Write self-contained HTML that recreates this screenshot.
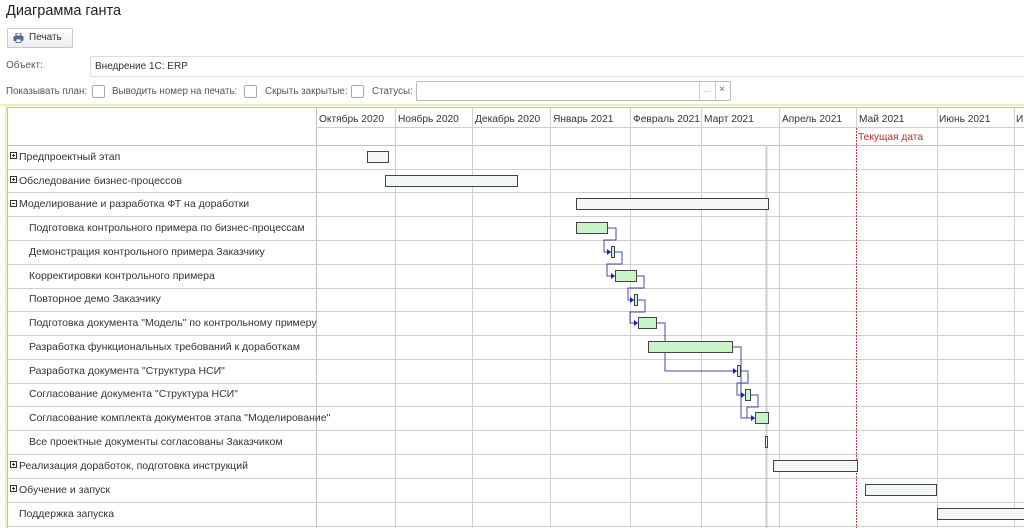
<!DOCTYPE html>
<html><head><meta charset="utf-8"><style>
body{margin:0;width:1024px;height:528px;overflow:hidden;background:#fff;font-family:"Liberation Sans",Arial,sans-serif;color:#333;position:relative}
.a{position:absolute;white-space:nowrap}
.cb{position:absolute;width:11px;height:11px;border:1px solid #aaa;border-radius:2px;background:#fff}
.t{position:absolute;font-size:10.5px;color:#333;white-space:nowrap}
</style></head><body>
<div class="a" style="left:6px;top:3px;font-size:14.5px;color:#222">Диаграмма ганта</div>
<div class="a" style="left:7px;top:28px;width:64px;height:18px;border:1px solid #c8c8c8;border-radius:2px;background:linear-gradient(#fff,#eee);font-size:10px;line-height:18px">
<svg style="position:absolute;left:5px;top:4px" width="11" height="10" viewBox="0 0 11 10"><rect x="3" y="0" width="5" height="3" fill="#fff" stroke="#557"/><rect x="0.5" y="3" width="10" height="5" rx="1" fill="#4a6a9a"/><rect x="3" y="6" width="5" height="3.5" fill="#fff" stroke="#557" stroke-width=".8"/></svg>
<span style="position:absolute;left:21px">Печать</span></div>
<div class="a" style="left:6px;top:60px;font-size:10px;color:#555">Объект:</div>
<div class="a" style="left:90px;top:56px;width:940px;height:19px;border:1px solid #ddd;border-radius:2px;font-size:10px;line-height:19px;text-indent:4px">Внедрение 1С: ERP</div>
<div class="a" style="left:6px;top:86px;font-size:9.8px;color:#555">Показывать план:</div>
<div class="cb" style="left:92px;top:85px"></div>
<div class="a" style="left:112px;top:86px;font-size:9.8px;color:#555">Выводить номер на печать:</div>
<div class="cb" style="left:244px;top:85px"></div>
<div class="a" style="left:265px;top:86px;font-size:9.8px;color:#555">Скрыть закрытые:</div>
<div class="cb" style="left:351px;top:85px"></div>
<div class="a" style="left:372px;top:86px;font-size:9.8px;color:#555">Статусы:</div>
<div class="a" style="left:416px;top:81px;width:313px;height:18px;border:1px solid #bbb;border-radius:2px"></div>
<div class="a" style="left:699px;top:82px;width:1px;height:18px;background:#ccc"></div>
<div class="a" style="left:715px;top:82px;width:1px;height:18px;background:#ccc"></div>
<div class="a" style="left:703px;top:84px;font-size:9px;color:#999">...</div>
<div class="a" style="left:719px;top:84px;font-size:10px;color:#666">×</div>
<div class="a" style="left:0;top:104px;width:1024px;height:2px;background:#f3efb0"></div>
<div class="a" style="left:5px;top:105px;width:2px;height:423px;background:#f3efb0"></div>
<svg class="a" style="left:0;top:0" width="1024" height="528">
<g stroke="#cfcfcf" stroke-width="1" fill="none">
<rect x="7.5" y="107.5" width="1020" height="430" stroke="#c0c0c0"/>
<line x1="316.5" y1="107" x2="316.5" y2="528" stroke="#c0c0c0"/>
<line x1="316" y1="127.5" x2="1024" y2="127.5"/>
<line x1="7" y1="145.5" x2="1024" y2="145.5" stroke="#c0c0c0"/>
<line x1="7" y1="169.5" x2="1024" y2="169.5"/><line x1="7" y1="192.5" x2="1024" y2="192.5"/><line x1="7" y1="216.5" x2="1024" y2="216.5"/><line x1="7" y1="240.5" x2="1024" y2="240.5"/><line x1="7" y1="264.5" x2="1024" y2="264.5"/><line x1="7" y1="288.5" x2="1024" y2="288.5"/><line x1="7" y1="311.5" x2="1024" y2="311.5"/><line x1="7" y1="335.5" x2="1024" y2="335.5"/><line x1="7" y1="359.5" x2="1024" y2="359.5"/><line x1="7" y1="383.5" x2="1024" y2="383.5"/><line x1="7" y1="406.5" x2="1024" y2="406.5"/><line x1="7" y1="430.5" x2="1024" y2="430.5"/><line x1="7" y1="454.5" x2="1024" y2="454.5"/><line x1="7" y1="478.5" x2="1024" y2="478.5"/><line x1="7" y1="502.5" x2="1024" y2="502.5"/><line x1="7" y1="526.5" x2="1024" y2="526.5"/>
<line x1="395.5" y1="107" x2="395.5" y2="528"/><line x1="472.5" y1="107" x2="472.5" y2="528"/><line x1="550.5" y1="107" x2="550.5" y2="528"/><line x1="630.5" y1="107" x2="630.5" y2="528"/><line x1="701.5" y1="107" x2="701.5" y2="528"/><line x1="779.5" y1="107" x2="779.5" y2="528"/><line x1="937.5" y1="107" x2="937.5" y2="528"/><line x1="1014.5" y1="107" x2="1014.5" y2="528"/>
<line x1="766.5" y1="145" x2="766.5" y2="528" stroke-width="2"/>
</g>
<line x1="856.5" y1="107" x2="856.5" y2="128" stroke="#d4d4d4"/>
<line x1="856.5" y1="128" x2="856.5" y2="528" stroke="#c04040" stroke-dasharray="2,1"/>
<g font-size="10.2" fill="#333" font-family="Liberation Sans,sans-serif">
<text x="319" y="122">Октябрь 2020</text><text x="398" y="122">Ноябрь 2020</text><text x="475" y="122">Декабрь 2020</text><text x="553" y="122">Январь 2021</text><text x="633" y="122">Февраль 2021</text><text x="704" y="122">Март 2021</text><text x="782" y="122">Апрель 2021</text><text x="859" y="122">Май 2021</text><text x="939" y="122">Июнь 2021</text><text x="1016" y="122">Ию</text>
<text x="858" y="140" fill="#b03030">Текущая дата</text>
</g>
<g stroke="#2a2a9a" stroke-width="1" fill="none" opacity=".85">
<path d="M608,228H616V240H604V252H611"/>
<path d="M615,252H622V264H607V276H615"/>
<path d="M637,276H644V288H628V300H634"/>
<path d="M638,300H645V312H630V323H638"/>
<path d="M657,323H665V371H737"/>
<path d="M733,347H741V418H755"/>
<path d="M741,371H748V383H737V395H745"/>
<path d="M751,395H758V407H747V418H755"/>
</g>
<g fill="#1a1ad0"><path d="M611,252l-4,-3v6z"/><path d="M615,276l-4,-3v6z"/><path d="M634,300l-4,-3v6z"/><path d="M638,323l-4,-3v6z"/><path d="M737,371l-4,-3v6z"/><path d="M745,395l-4,-3v6z"/><path d="M755,418l-4,-3v6z"/></g>
<g stroke="#444" stroke-width="1">
<rect x="367.5" y="151.5" width="21" height="11" fill="#f2f7f5"/>
<rect x="385.5" y="175.5" width="132" height="11" fill="#f2f7f5"/>
<rect x="576.5" y="198.5" width="192" height="11" fill="#f2f7f5"/>
<rect x="576.5" y="222.5" width="31" height="11" fill="#c8f5c8"/>
<rect x="611.5" y="246.5" width="3" height="11" fill="#c8f5c8"/>
<rect x="615.5" y="270.5" width="21" height="11" fill="#c8f5c8"/>
<rect x="634.5" y="294.5" width="3" height="11" fill="#c8f5c8"/>
<rect x="638.5" y="317.5" width="18" height="11" fill="#c8f5c8"/>
<rect x="648.5" y="341.5" width="84" height="11" fill="#c8f5c8"/>
<rect x="737.5" y="365.5" width="3" height="11" fill="#c8f5c8"/>
<rect x="745.5" y="389.5" width="5" height="11" fill="#c8f5c8"/>
<rect x="755.5" y="412.5" width="13" height="11" fill="#c8f5c8"/>
<rect x="765.5" y="436.5" width="2" height="11" fill="#f2f7f5"/>
<rect x="773.5" y="460.5" width="84" height="11" fill="#f2f7f5"/>
<rect x="865.5" y="484.5" width="71" height="11" fill="#f2f7f5"/>
<rect x="937.5" y="508.5" width="90" height="11" fill="#f2f7f5"/>
</g>
<g stroke="#333" fill="#fff" stroke-width="1">
<rect x="10.5" y="152.5" width="6" height="6"/><rect x="10.5" y="176.5" width="6" height="6"/><rect x="10.5" y="200.5" width="6" height="6"/><rect x="10.5" y="461.5" width="6" height="6"/><rect x="10.5" y="485.5" width="6" height="6"/>
<path d="M12,155.5h3M13.5,154v3M12,179.5h3M13.5,178v3M12,203.5h3M12,464.5h3M13.5,463v3M12,488.5h3M13.5,487v3"/>
</g>
</svg>
<div class="t" style="left:19px;top:151px">Предпроектный этап</div>
<div class="t" style="left:19px;top:175px">Обследование бизнес-процессов</div>
<div class="t" style="left:19px;top:198px">Моделирование и разработка ФТ на доработки</div>
<div class="t" style="left:29px;top:222px">Подготовка контрольного примера по бизнес-процессам</div>
<div class="t" style="left:29px;top:246px">Демонстрация контрольного примера Заказчику</div>
<div class="t" style="left:29px;top:270px">Корректировки контрольного примера</div>
<div class="t" style="left:29px;top:293px">Повторное демо Заказчику</div>
<div class="t" style="left:29px;top:317px">Подготовка документа "Модель" по контрольному примеру</div>
<div class="t" style="left:29px;top:341px">Разработка функциональных требований к доработкам</div>
<div class="t" style="left:29px;top:365px">Разработка документа "Структура НСИ"</div>
<div class="t" style="left:29px;top:388px">Согласование документа "Структура НСИ"</div>
<div class="t" style="left:29px;top:412px">Согласование комплекта документов этапа "Моделирование"</div>
<div class="t" style="left:29px;top:436px">Все проектные документы согласованы Заказчиком</div>
<div class="t" style="left:19px;top:460px">Реализация доработок, подготовка инструкций</div>
<div class="t" style="left:19px;top:484px">Обучение и запуск</div>
<div class="t" style="left:19px;top:508px">Поддержка запуска</div>
</body></html>
